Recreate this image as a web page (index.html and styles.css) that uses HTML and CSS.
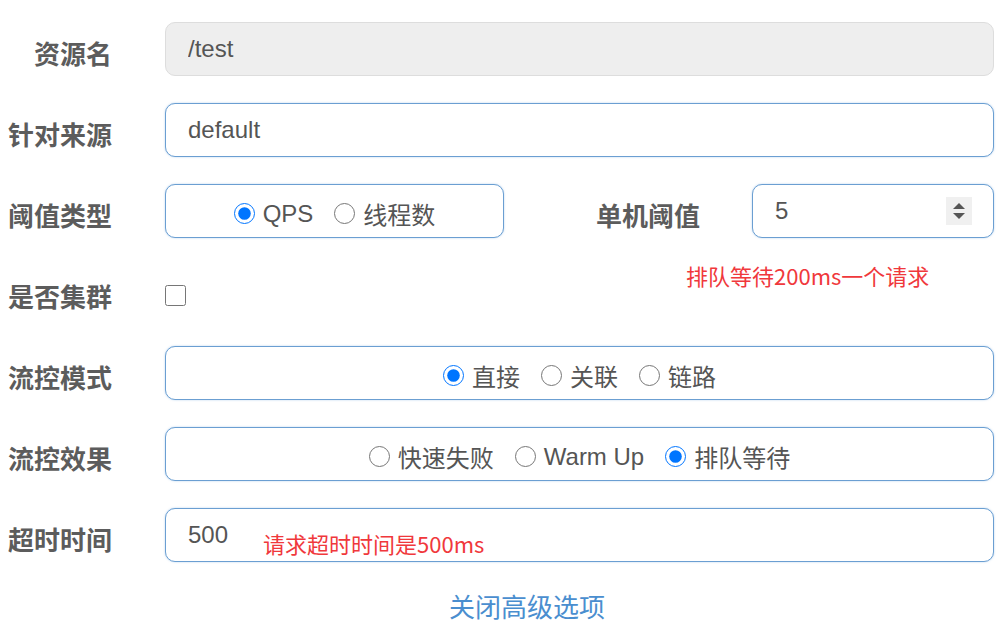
FILE: index.html
```html
<!DOCTYPE html>
<html>

<head>
	<title>流控规则</title>
	<link rel="stylesheet" href="styles.css">
</head>

<body>
	<div class="form">
		<div class="row">
			<label class="name">资源名</label>
			<input class="box" type="text" value="/test" disabled>
		</div>
		<div class="row">
			<label class="name">针对来源</label>
			<input class="box" type="text" value="default">
		</div>
		<div class="row tip-row">
			<label class="name">阈值类型</label>
			<div class="box group narrow">
				<label class="opt"><input type="radio" name="grade" checked>QPS</label>
				<label class="opt"><input type="radio" name="grade">线程数</label>
			</div>
			<label class="name side">单机阈值</label>
			<div class="num">
				<input class="box" type="text" value="5">
				<span class="spin">
					<svg width="26" height="28" viewBox="0 0 26 28">
						<path d="M7 12 L13 6 L19 12 Z" fill="#555" />
						<path d="M7 16 L13 22 L19 16 Z" fill="#555" />
					</svg>
				</span>
			</div>
			<span class="tip">排队等待200ms一个请求</span>
		</div>
		<div class="row">
			<label class="name">是否集群</label>
			<div class="check"><input type="checkbox"></div>
		</div>
		<div class="row">
			<label class="name">流控模式</label>
			<div class="box group">
				<label class="opt"><input type="radio" name="mode" checked>直接</label>
				<label class="opt"><input type="radio" name="mode">关联</label>
				<label class="opt"><input type="radio" name="mode">链路</label>
			</div>
		</div>
		<div class="row">
			<label class="name">流控效果</label>
			<div class="box group">
				<label class="opt"><input type="radio" name="effect">快速失败</label>
				<label class="opt"><input type="radio" name="effect">Warm Up</label>
				<label class="opt"><input type="radio" name="effect" checked>排队等待</label>
			</div>
		</div>
		<div class="row">
			<label class="name">超时时间</label>
			<div class="timeout">
				<input class="box" type="text" value="500">
				<span class="note">请求超时时间是500ms</span>
			</div>
		</div>
		<div class="more">
			<a href="#">关闭高级选项</a>
		</div>
	</div>
</body>

</html>
```

FILE: styles.css
```css
html,
body {
	margin: 0;
	padding: 0;
	background: #fff;
}

body {
	font-family: "Liberation Sans", "Noto Sans CJK SC", sans-serif;
	color: #555;
}

.form {
	width: 1005px;
	padding: 22px 11px 0 0;
	box-sizing: border-box;
}

.row {
	display: flex;
	align-items: center;
	height: 54px;
	margin-bottom: 27px;
}

.tip-row {
	position: relative;
}

.name {
	flex: 0 0 112px;
	margin-right: 53px;
	padding-top: 6px;
	text-align: right;
	font-family: "Noto Sans CJK SC", sans-serif;
	font-weight: bold;
	font-size: 26px;
	color: #5c5c5c;
	white-space: nowrap;
}

.box {
	flex: 1 0 0;
	min-width: 0;
	width: 100%;
	height: 54px;
	box-sizing: border-box;
	border: 1px solid #6b9fd2;
	border-radius: 10px;
	box-shadow: 0 0 2px rgba(102, 160, 220, 0.5);
	background: #fff;
	padding: 0 22px;
	font-family: inherit;
	font-size: 24px;
	color: #555;
	outline: none;
}

.box:disabled {
	background: #eee;
	border-color: #ddd;
	box-shadow: none;
}

.group {
	display: flex;
	justify-content: center;
	align-items: center;
	gap: 21px;
	padding-top: 5px;
}

.narrow {
	flex: 0 0 339px;
}

.opt {
	display: flex;
	align-items: center;
	font-family: "Liberation Sans", "Noto Sans CJK SC", sans-serif;
	font-size: 24px;
	color: #555;
}

.opt input {
	width: 21px;
	height: 21px;
	margin: 0 8px 0 0;
}

.side {
	flex: 1 0 0;
	margin-right: 52px;
}

.num {
	flex: 0 0 242px;
	display: flex;
	position: relative;
}

.spin {
	position: absolute;
	right: 22px;
	top: 13px;
	width: 26px;
	height: 28px;
	background: #f0f0f0;
}

.tip {
	position: absolute;
	left: 686px;
	top: 75px;
	font-family: "Noto Sans CJK SC", sans-serif;
	font-size: 22px;
	color: #f0383c;
	white-space: nowrap;
}

.check input {
	width: 21px;
	height: 21px;
	margin: 10px 0 0 0;
}

.timeout {
	flex: 1 0 0;
	display: flex;
	position: relative;
}

.note {
	position: absolute;
	left: 98px;
	top: 19px;
	font-family: "Noto Sans CJK SC", sans-serif;
	font-size: 22px;
	color: #f0383c;
	white-space: nowrap;
}

.more {
	padding: 0 0 0 60px;
	margin-top: -2px;
	text-align: center;
}

.more a {
	font-family: "Noto Sans CJK SC", sans-serif;
	font-size: 26px;
	color: #4a8ecf;
	text-decoration: none;
}
```
